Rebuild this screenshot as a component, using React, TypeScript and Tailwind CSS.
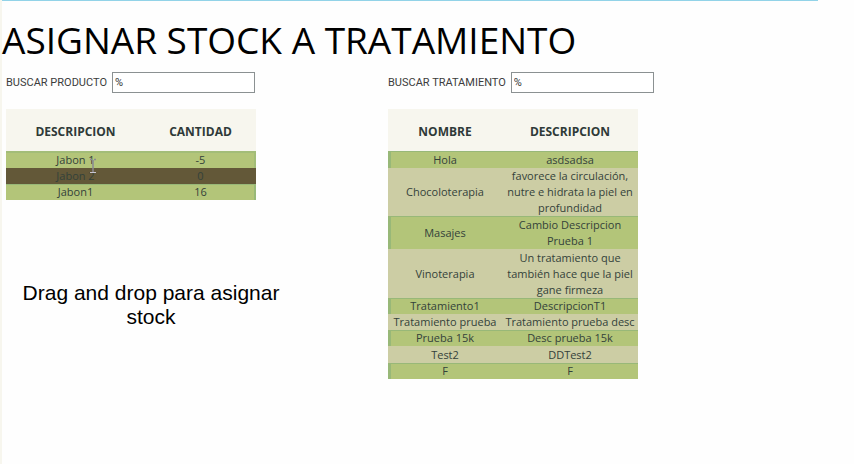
type Row = { cells: [string, string]; tone: string };

const GREEN = "bg-[#b3c579] shadow-[inset_3px_1px_0_#98b878]";
const SAND = "bg-[#cccda4]";
const BROWN = "bg-[#635838]";

const products: Row[] = [
  { cells: ["Jabon 1", "-5"], tone: "h-[17px] bg-[#b3c579] shadow-[inset_-2px_2px_0_#a3bd78]" },
  { cells: ["Jabon 2", "0"], tone: BROWN },
  { cells: ["Jabon1", "16"], tone: "bg-[#b3c579] shadow-[inset_-2px_1px_0_#98b878]" },
];

const treatments: Row[] = [
  { cells: ["Hola", "asdsadsa"], tone: `h-[17px] ${GREEN}` },
  { cells: ["Chocoloterapia", "favorece la circulación, nutre e hidrata la piel en profundidad"], tone: SAND },
  { cells: ["Masajes", "Cambio Descripcion Prueba 1"], tone: `h-[33px] ${GREEN}` },
  { cells: ["Vinoterapia", "Un tratamiento que también hace que la piel gane firmeza"], tone: `h-[49px] ${SAND}` },
  { cells: ["Tratamiento1", "DescripcionT1"], tone: GREEN },
  { cells: ["Tratamiento prueba", "Tratamiento prueba desc"], tone: SAND },
  { cells: ["Prueba 15k", "Desc prueba 15k"], tone: GREEN },
  { cells: ["Test2", "DDTest2"], tone: `h-[17px] ${SAND}` },
  { cells: ["F", "F"], tone: GREEN },
];

function SearchField({ id, label }: { id: string; label: string }) {
  return (
    <div className="flex items-center gap-[5px] whitespace-nowrap font-['Roboto',sans-serif] text-[11px] text-[#3c3c3c]">
      <label htmlFor={id} className="pt-0.5">{label}</label>
      <input
        id={id}
        type="text"
        defaultValue="%"
        className="h-[21px] w-[143px] border border-[#8b9192] bg-white px-0.5 text-[11px] text-[#333] outline-none"
      />
    </div>
  );
}

function DataTable({ heads, rows, firstCol }: { heads: [string, string]; rows: Row[]; firstCol: string }) {
  return (
    <table className="mt-4 w-[250px] table-fixed border-collapse text-center text-[11px] leading-4 text-[#34423a]">
      <thead>
        <tr className="h-[42px] bg-[#f7f6ee] text-xs text-[#2f3a38]">
          <th scope="col" className={`${firstCol} p-0 pt-1 font-bold`}>{heads[0]}</th>
          <th scope="col" className="p-0 pt-1 font-bold">{heads[1]}</th>
        </tr>
      </thead>
      <tbody>
        {rows.map((row) => (
          <tr key={row.cells[0]} className={row.tone}>
            <td className="p-0">{row.cells[0]}</td>
            <td className="p-0">{row.cells[1]}</td>
          </tr>
        ))}
      </tbody>
    </table>
  );
}

export default function App() {
  return (
    <main className="relative min-h-screen border-l-2 border-[#f7f6ee] bg-[#fefefe] font-['Open_Sans',sans-serif]">
      <div className="mr-9 h-px bg-[#92d3e8]" />
      <h1 className="mt-[15px] text-[37px] leading-[48px] text-black">ASIGNAR STOCK A TRATAMIENTO</h1>
      <div className="mt-2 flex pl-1">
        <section className="w-[382px] shrink-0">
          <SearchField id="producto" label="BUSCAR PRODUCTO" />
          <DataTable heads={["DESCRIPCION", "CANTIDAD"]} rows={products} firstCol="w-[139px]" />
          <p className="mt-[81px] w-[290px] px-4 text-center font-['Liberation_Sans',Arial,sans-serif] text-[21px] leading-6 text-black">
            Drag and drop para asignar stock
          </p>
        </section>
        <section>
          <SearchField id="tratamiento" label="BUSCAR TRATAMIENTO" />
          <DataTable heads={["NOMBRE", "DESCRIPCION"]} rows={treatments} firstCol="w-[114px]" />
        </section>
      </div>
      <svg
        aria-hidden="true"
        className="pointer-events-none absolute left-[87px] top-[158px]"
        width="8"
        height="15"
        viewBox="0 0 8 15"
        fill="none"
      >
        <path d="M1 1.500h2M5 1.500h2M4 2v12" stroke="#8b8893" strokeWidth="1.500" />
        <path d="M1 14.500h6" stroke="#c9c6d2" />
      </svg>
    </main>
  );
}
